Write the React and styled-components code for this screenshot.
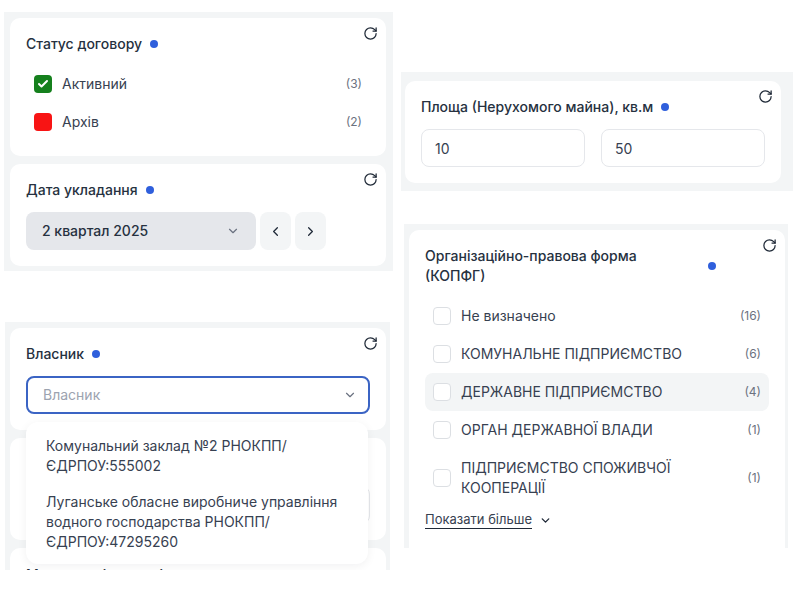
import React from 'react';
import styled, { createGlobalStyle } from 'styled-components';
import { ChevronDown, ChevronLeft, ChevronRight, RotateCw, Check } from 'lucide-react';

const Global = createGlobalStyle`
  html, body { margin: 0; padding: 0; background: #fff; }
  body { font-family: Inter, "Noto Sans", sans-serif; color: #1f2937; font-size: 14px; line-height: 20px; }
  * { box-sizing: border-box; }
`;

const Page = styled.div`
  width: 800px;
  height: 600px;
  overflow: hidden;
  display: flex;
  align-items: flex-start;
`;

const Column = styled.div`
  display: flex;
  flex-direction: column;
  align-items: flex-start;
  width: ${p => p.$w}px;
  padding-top: ${p => p.$top}px;
`;

const Panel = styled.section`
  display: flex;
  flex-direction: column;
  gap: 8px;
  flex: none;
  overflow: hidden;
  background: #f3f5f6;
  width: ${p => p.$w}px;
  height: ${p => p.$h}px;
  margin: ${p => p.$m};
  padding: ${p => p.$p};
`;

const Card = styled.div`
  position: relative;
  flex: none;
  background: #fff;
  border-radius: 10px;
  padding: ${p => p.$pt || 16}px 16px 16px;
  height: ${p => p.$h}px;
  z-index: ${p => p.$raised ? 1 : 'auto'};
`;

const Refresh = styled(RotateCw)`
  position: absolute;
  top: 8px;
  right: 8px;
  width: 15px;
  height: 15px;
  color: #1f2937;
  stroke-width: 2;
`;

const TitleRow = styled.div`
  display: flex;
  align-items: center;
  gap: 8px;
`;

const Title = styled.h3`
  margin: 0;
  font-size: 14px;
  line-height: 20px;
  font-weight: 500;
  color: #263140;
  flex: ${p => p.$wide ? '0 0 275px' : '0 1 auto'};
  padding-right: ${p => p.$wide ? '8px' : '0'};
`;

const Dot = styled.span`
  flex: none;
  width: 8px;
  height: 8px;
  border-radius: 50%;
  background: #2f5fdc;
`;

const List = styled.div`
  display: flex;
  flex-direction: column;
  margin-top: 11px;
`;

const Row = styled.div`
  display: flex;
  align-items: center;
  gap: 10px;
  padding: 0 8px;
  min-height: ${p => p.$tall ? 58 : 38}px;
  border-radius: 8px;
  background: ${p => p.$hover ? '#f3f5f6' : 'transparent'};
`;

const Box = styled.span`
  flex: none;
  display: flex;
  align-items: center;
  justify-content: center;
  width: 18px;
  height: 18px;
  border-radius: 4px;
  color: #fff;
  background: ${p => p.$color || '#fff'};
  border: ${p => p.$color ? 'none' : '1px solid #dcdfe3'};
`;

const Label = styled.span`
  flex: 1;
  font-size: 14px;
  line-height: 20px;
  color: #374151;
`;

const Count = styled.span`
  flex: none;
  font-size: 12px;
  color: #6b7280;
`;

const QuarterRow = styled.div`
  display: flex;
  gap: 4px;
  margin-top: 12px;
`;

const QuarterSelect = styled.div`
  width: 230px;
  height: 38px;
  display: flex;
  align-items: center;
  justify-content: space-between;
  padding: 0 16px;
  border-radius: 8px;
  background: #e5e7eb;
  font-weight: 500;
  color: #263140;
  & svg { color: #6b7280; width: 14px; height: 14px; }
`;

const IconButton = styled.button`
  width: 31px;
  height: 38px;
  padding: 0;
  border: 0;
  border-radius: 8px;
  background: #f3f5f6;
  color: #1f2937;
  display: flex;
  align-items: center;
  justify-content: center;
  & svg { width: 15px; height: 15px; }
`;

const SelectWrap = styled.div`
  position: relative;
  margin-top: 12px;
`;

const Combo = styled.div`
  height: 38px;
  display: flex;
  align-items: center;
  justify-content: space-between;
  padding: 0 11px 0 15px;
  border: 2px solid #3b64c4;
  border-radius: 8px;
  background: #fff;
  color: #9ca3af;
  & svg { width: 14px; height: 14px; color: #6b7280; }
`;

const Dropdown = styled.ul`
  position: absolute;
  z-index: 2;
  top: 46px;
  left: 0;
  width: 342px;
  margin: 0;
  padding: 6px 0 4px;
  list-style: none;
  background: #fff;
  border-radius: 12px;
  box-shadow: 0 2px 10px rgba(17, 24, 39, 0.06);
`;

const Option = styled.li`
  padding: 8px 20px;
  color: #374151;
  line-height: 20px;
`;

const Inputs = styled.div`
  display: grid;
  grid-template-columns: 164px 164px;
  gap: 16px;
  margin-top: 12px;
`;

const Field = styled.div`
  height: 38px;
  margin-top: ${p => p.$mt || 0}px;
  display: flex;
  align-items: center;
  padding: 1px 13px 0;
  border: 1px solid #e5e7eb;
  border-radius: 8px;
  background: #fff;
  color: #374151;
`;

const MoreRow = styled.div`
  display: flex;
  align-items: center;
  gap: 7px;
  margin-top: 1px;
  height: 24px;
  & svg { width: 13px; height: 13px; color: #1f2937; }
`;

const MoreLink = styled.a`
  font-size: 13px;
  line-height: 17px;
  color: #374151;
  border-bottom: 1px solid #1f2937;
`;

const Heading = ({ children, wide }) => (
  <TitleRow>
    <Title $wide={wide}>{children}</Title>
    <Dot />
  </TitleRow>
);

const Item = ({ color, checked, label, count, hover, tall }) => (
  <Row $hover={hover} $tall={tall}>
    <Box $color={color}>{checked && <Check size={12} strokeWidth={4} />}</Box>
    <Label>{label}</Label>
    <Count>({count})</Count>
  </Row>
);

export default function App() {
  return (
    <Page>
      <Global />
      <Column $w={401} $top={12}>
        <Panel $w={389} $h={259} $m="0 0 0 4px" $p="6px 7px 0 6px">
          <Card $h={138}>
            <Refresh />
            <Heading>Статус договору</Heading>
            <List>
              <Item color="#15801d" checked label="Активний" count={3} />
              <Item color="#f81414" label="Архів" count={2} />
            </List>
          </Card>
          <Card $h={102}>
            <Refresh />
            <Heading>Дата укладання</Heading>
            <QuarterRow>
              <QuarterSelect>2 квартал 2025 <ChevronDown /></QuarterSelect>
              <IconButton><ChevronLeft /></IconButton>
              <IconButton><ChevronRight /></IconButton>
            </QuarterRow>
          </Card>
        </Panel>
        <Panel $w={385} $h={248} $m="51px 0 0 5px" $p="6px 4px 0 5px">
          <Card $h={102} $raised>
            <Refresh />
            <Heading>Власник</Heading>
            <SelectWrap>
              <Combo>Власник <ChevronDown /></Combo>
              <Dropdown>
                <Option>Комунальний заклад №2 РНОКПП/ЄДРПОУ:555002</Option>
                <Option>Луганське обласне виробниче управління водного господарства РНОКПП/ЄДРПОУ:47295260</Option>
              </Dropdown>
            </SelectWrap>
          </Card>
          <Card $h={102}>
            <Field $mt={32} />
          </Card>
          <Card $h={60} $pt={17}>
            <Heading>Мережева інженерія</Heading>
          </Card>
        </Panel>
      </Column>
      <Column $w={399} $top={72}>
        <Panel $w={392} $h={119} $m="0" $p="9px 12px 0 4px">
          <Card $h={102}>
            <Refresh />
            <Heading>Площа (Нерухомого майна), кв.м</Heading>
            <Inputs>
              <Field>10</Field>
              <Field>50</Field>
            </Inputs>
          </Card>
        </Panel>
        <Panel $w={384} $h={324} $m="33px 0 0 3px" $p="6px 3px 0 5px">
          <Card $h={330}>
            <Refresh />
            <Heading wide>Організаційно-правова форма (КОПФГ)</Heading>
            <List>
              <Item label="Не визначено" count={16} />
              <Item label="КОМУНАЛЬНЕ ПІДПРИЄМСТВО" count={6} />
              <Item hover label="ДЕРЖАВНЕ ПІДПРИЄМСТВО" count={4} />
              <Item label="ОРГАН ДЕРЖАВНОЇ ВЛАДИ" count={1} />
              <Item tall label="ПІДПРИЄМСТВО СПОЖИВЧОЇ КООПЕРАЦІЇ" count={1} />
            </List>
            <MoreRow>
              <MoreLink>Показати більше</MoreLink>
              <ChevronDown strokeWidth={2.5} />
            </MoreRow>
          </Card>
        </Panel>
      </Column>
    </Page>
  );
}
